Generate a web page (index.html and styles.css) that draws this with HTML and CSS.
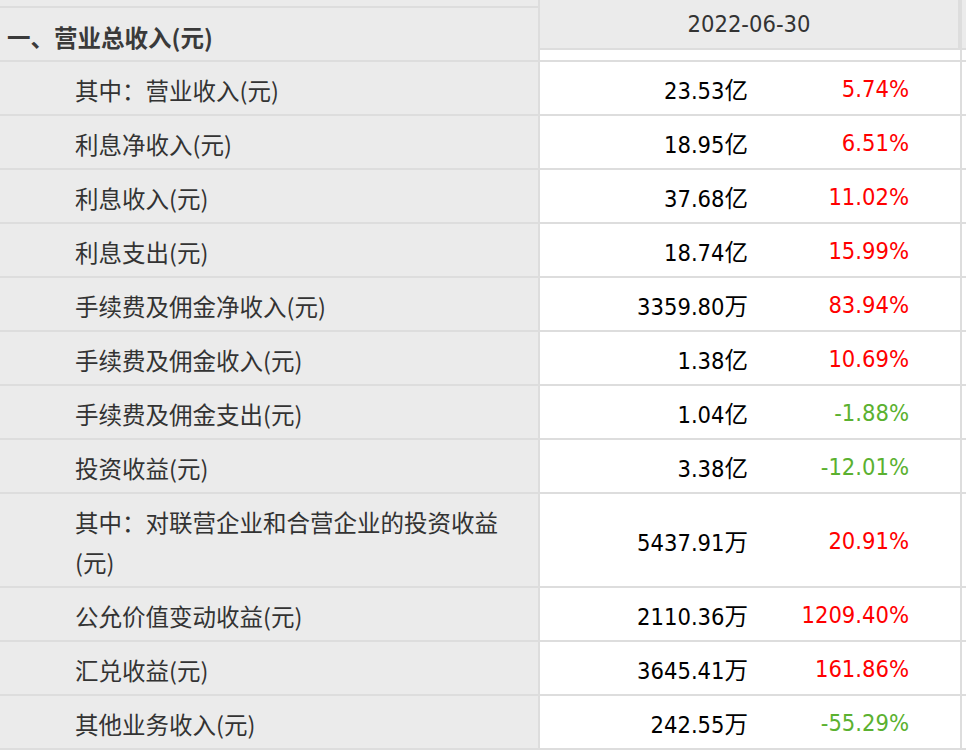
FILE: index.html
```html
<!DOCTYPE html>
<html lang="zh-CN">
<head>
<meta charset="utf-8">
<title>营业总收入</title>
<link rel="stylesheet" href="styles.css">
</head>
<body>
<div class="sheet">
  <div class="col col-label">
    <div class="cell cut"></div>
    <div class="cell lvl1">一、营业总收入(元)</div>
    <div class="cell lvl2">其中：营业收入(元)</div>
    <div class="cell lvl2">利息净收入(元)</div>
    <div class="cell lvl2">利息收入(元)</div>
    <div class="cell lvl2">利息支出(元)</div>
    <div class="cell lvl2">手续费及佣金净收入(元)</div>
    <div class="cell lvl2">手续费及佣金收入(元)</div>
    <div class="cell lvl2">手续费及佣金支出(元)</div>
    <div class="cell lvl2">投资收益(元)</div>
    <div class="cell lvl2 tall"><span class="wrap">其中：对联营企业和合营企业的投资收益(元)</span></div>
    <div class="cell lvl2">公允价值变动收益(元)</div>
    <div class="cell lvl2">汇兑收益(元)</div>
    <div class="cell lvl2">其他业务收入(元)</div>
  </div>
  <div class="col col-data">
    <div class="head"><div class="head-cell">2022-06-30</div></div>
    <div class="cell spacer"></div>
    <div class="cell drow"><span class="val">23.53亿</span><span class="pct up">5.74%</span></div>
    <div class="cell drow"><span class="val">18.95亿</span><span class="pct up">6.51%</span></div>
    <div class="cell drow"><span class="val">37.68亿</span><span class="pct up">11.02%</span></div>
    <div class="cell drow"><span class="val">18.74亿</span><span class="pct up">15.99%</span></div>
    <div class="cell drow"><span class="val">3359.80万</span><span class="pct up">83.94%</span></div>
    <div class="cell drow"><span class="val">1.38亿</span><span class="pct up">10.69%</span></div>
    <div class="cell drow"><span class="val">1.04亿</span><span class="pct down">-1.88%</span></div>
    <div class="cell drow"><span class="val">3.38亿</span><span class="pct down">-12.01%</span></div>
    <div class="cell drow tall"><span class="val">5437.91万</span><span class="pct up">20.91%</span></div>
    <div class="cell drow"><span class="val">2110.36万</span><span class="pct up">1209.40%</span></div>
    <div class="cell drow"><span class="val">3645.41万</span><span class="pct up">161.86%</span></div>
    <div class="cell drow"><span class="val">242.55万</span><span class="pct down">-55.29%</span></div>
  </div>
  <div class="col col-next">
    <div class="head"></div>
    <div class="cell spacer"></div>
    <div class="cell"></div>
    <div class="cell"></div>
    <div class="cell"></div>
    <div class="cell"></div>
    <div class="cell"></div>
    <div class="cell"></div>
    <div class="cell"></div>
    <div class="cell"></div>
    <div class="cell tall"></div>
    <div class="cell"></div>
    <div class="cell"></div>
    <div class="cell"></div>
  </div>
</div>
</body>
</html>
```
FILE: styles.css
```css
html, body {
  margin: 0;
  padding: 0;
  background: #ffffff;
}
body {
  width: 966px;
  height: 752px;
  overflow: hidden;
  font-family: "Noto Sans CJK SC", sans-serif;
}
.sheet {
  display: flex;
  align-items: flex-start;
  width: 966px;
}
.col {
  display: flex;
  flex-direction: column;
  flex: none;
}
.col-label {
  width: 538px;
  border-right: 2px solid #dddddd;
  background: #ebebeb;
}
.col-data {
  width: 420px;
  border-right: 2px solid #dddddd;
  background: #ffffff;
}
.col-next {
  flex: 1 1 auto;
  min-width: 4px;
  background: #ffffff;
}
.cell {
  box-sizing: border-box;
  height: 54px;
  border-bottom: 2px solid #dddddd;
  display: flex;
  align-items: center;
}
.cell.tall {
  height: 94px;
}
.cut {
  height: 8px;
}
.lvl1, .lvl2 {
  padding-top: 4px;
  font-size: 23.5px;
  color: #333333;
}
.lvl1 {
  padding-left: 7px;
  padding-top: 6px;
  font-weight: 700;
  color: #3a3a3a;
}
.lvl2 {
  padding-left: 75px;
  padding-right: 34px;
}
.wrap {
  line-height: 40px;
}
.head {
  box-sizing: border-box;
  height: 50px;
  border-bottom: 2px solid #dddddd;
  background: #ebebeb;
  display: flex;
}
.head-cell {
  box-sizing: border-box;
  width: 420px;
  border-right: 2px solid #dddddd;
  display: flex;
  align-items: center;
  justify-content: center;
  font-family: "DejaVu Sans", "Noto Sans CJK SC", sans-serif;
  font-stretch: condensed;
  font-size: 23.5px;
  color: #333333;
  padding-top: 0;
}
.spacer {
  height: 12px;
}
.drow {
  display: grid;
  grid-template-columns: 210px 210px;
  align-items: center;
  font-family: "DejaVu Sans", "Noto Sans CJK SC", sans-serif;
  font-stretch: condensed;
  font-size: 23.5px;
  color: #000000;
  padding-top: 2px;
}
.val {
  text-align: right;
  padding-right: 2px;
}
.pct {
  text-align: right;
  padding-right: 51px;
}
.up {
  color: #ff0000;
}
.down {
  color: #5bb130;
}
```
